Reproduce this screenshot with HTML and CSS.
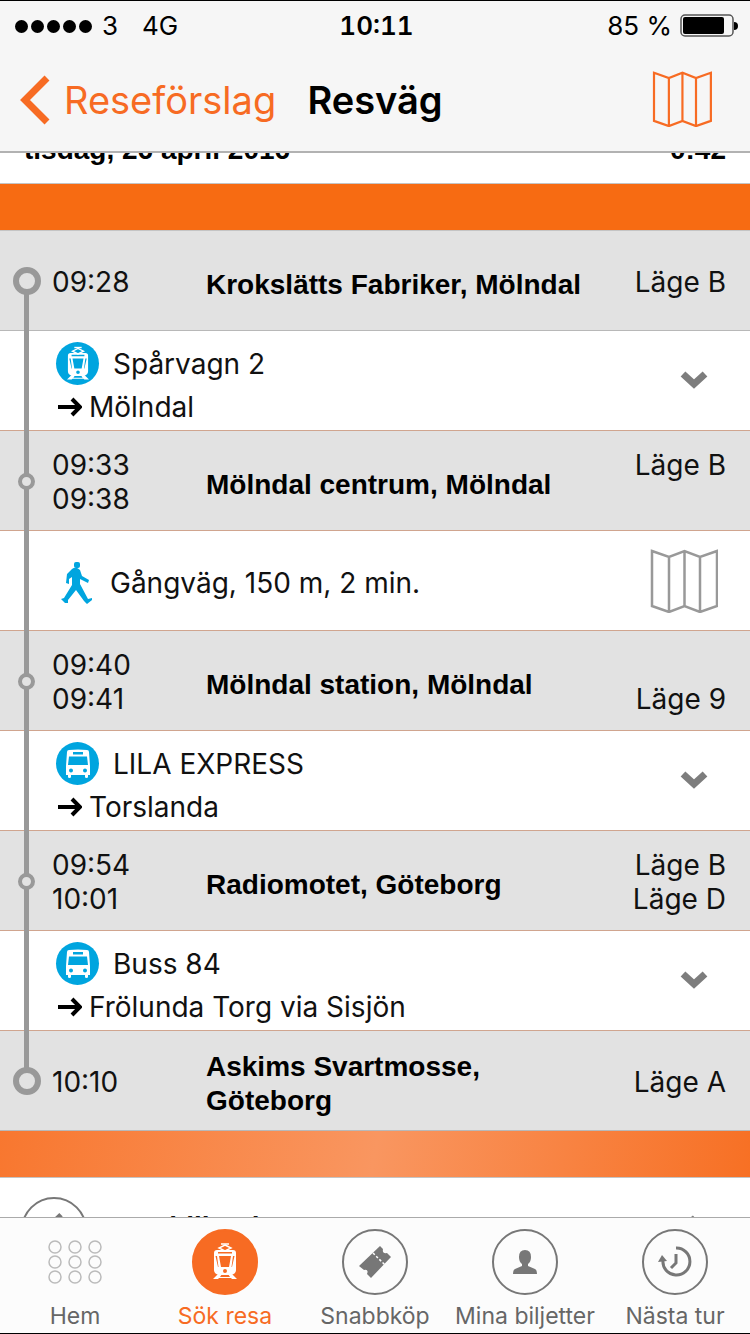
FILE: index.html
```html
<!DOCTYPE html>
<html lang="sv">
<head>
    <meta charset="utf-8">
    <meta name="viewport" content="width=device-width, initial-scale=1">
    <title>Resväg</title>
    <link rel="stylesheet" href="styles.css">
</head>
<body>
    <svg class="defs" aria-hidden="true">
        <symbol id="map" viewBox="0 0 68 64">
            <path d="M2 2 L19 8 L34.500 2 L50 8 L67 2 V57 L50 63 L34.500 57 L19 63 L2 57 Z M19 8 V63 M34.500 2 V57 M50 8 V63" fill="none" stroke="currentColor" stroke-width="2.500"/>
        </symbol>
        <symbol id="tram" viewBox="0 0 24 38">
            <path d="M12 2 L18 5 L12 8 L6 5 Z" fill="none" stroke="currentColor" stroke-width="1.500"/>
            <path d="M8 1 H16" stroke="currentColor" stroke-width="1.500"/>
            <path fill="currentColor" fill-rule="evenodd" d="M4 7 H20 Q23 7 23 10 V27 Q23 31 18 32 H6 Q1 31 1 27 V10 Q1 7 4 7 Z M5 9 V10.500 H19 V9 Z M2.500 13 L5 24 L5.500 24 L4 13 Z M6 13 L8 24 H16 L18 13 Z M21.500 13 L19 24 L18.500 24 L20 13 Z M12 26 A2 2 0 1 0 12 30 A2 2 0 1 0 12 26 Z"/>
            <path fill="currentColor" d="M5 31 H9 L7 34 H17 L15 31 H19 L24 36 H19 L18 35 H6 L5 36 H0 Z"/>
        </symbol>
        <symbol id="bus" viewBox="0 0 24 30">
            <path fill="currentColor" fill-rule="evenodd" d="M3 1 Q12 0 21 1 Q23 1 23 3 L24 17 V26 H22 V28 Q22 29 20.500 29 Q19 29 19 28 V26 H5 V28 Q5 29 3.500 29 Q2 29 2 28 V26 H0 V17 L1 3 Q1 1 3 1 Z M7 3 V5.500 H17 V3 Z M3 7.500 L2 16 H22 L21 7.500 Z M5 19.500 A2 2 0 1 0 5 23.500 A2 2 0 1 0 5 19.500 Z M19 19.500 A2 2 0 1 0 19 23.500 A2 2 0 1 0 19 19.500 Z"/>
        </symbol>
        <symbol id="walk" viewBox="0 0 32 42">
            <rect x="13" y="0" width="6" height="6" rx="2"/>
            <path d="M11 7 Q15 4 19 8 L21 14 L28 18 L27 21 L19 17 V22 L27 37 L31 36 V38 L26 42 L23 39 L15 28 L7 38 V41 L4 41 L0 37 L3 36 L11 23 V15 L8 17 V22 L5 21 L6 12 Z"/>
        </symbol>
        <symbol id="arrow" viewBox="0 0 26 20">
            <path d="M2 10 H24 M16 2 L24 10 L16 18" fill="none" stroke="currentColor" stroke-width="4"/>
        </symbol>
        <symbol id="chevron" viewBox="0 0 28 18">
            <path d="M3 3 L14 13 L25 3" fill="none" stroke="currentColor" stroke-width="7"/>
        </symbol>
        <symbol id="ticket" viewBox="0 0 32 32">
            <path fill="currentColor" d="M21 0 L24 3 Q23 8 28 7 L32 11 L12 32 L8 28 Q10 23 5 24 L0 20 Z"/>
            <path d="M14 7 L26 19" stroke="#fff" stroke-width="1.500" stroke-dasharray="2.500 2"/>
        </symbol>
    </svg>

    <header>
        <div class="status">
            <div class="carrier">
                <span class="signal"><i></i><i></i><i></i><i></i><i></i></span>
                <span>3</span>
                <span class="network">4G</span>
            </div>
            <strong>10:11</strong>
            <div class="battery">
                <span>85 %</span>
                <svg width="58" height="24" viewBox="0 0 58 24">
                    <rect x="1" y="1" width="52" height="21" rx="4" fill="none" stroke="#555" stroke-width="1.500"/>
                    <rect x="3" y="3" width="41" height="17" rx="2"/>
                    <path d="M54 8 Q58 8 58 12 Q58 16 54 16 Z"/>
                </svg>
            </div>
        </div>
        <div class="navbar">
            <a class="back" href="#">
                <svg width="30" height="50" viewBox="0 0 30 50"><path d="M27 3 L5 25 L27 47" fill="none" stroke="currentColor" stroke-width="7"/></svg>
                Reseförslag
            </a>
            <h1>Resväg</h1>
            <button class="map-link" aria-label="Karta"><svg width="60" height="56"><use href="#map"/></svg></button>
        </div>
    </header>

    <main>
        <div class="summary">
            <span>tisdag, 26 april 2016</span>
            <span>0:42</span>
        </div>
        <div class="band"></div>

        <ol class="route">
            <li class="stop">
                <span class="node big"></span>
                <div class="times">09:28</div>
                <h2>Krokslätts Fabriker, Mölndal</h2>
                <div class="platform">Läge B</div>
            </li>
            <li class="leg">
                <div class="ride">
                    <div class="line"><span class="badge"><svg width="22" height="36"><use href="#tram"/></svg></span>Spårvagn 2</div>
                    <div class="towards"><svg width="26" height="20"><use href="#arrow"/></svg>Mölndal</div>
                </div>
                <button class="more" aria-label="Visa hållplatser"><svg width="28" height="18"><use href="#chevron"/></svg></button>
            </li>
            <li class="stop">
                <span class="node"></span>
                <div class="times">09:33<br>09:38</div>
                <h2>Mölndal centrum, Mölndal</h2>
                <div class="platform">Läge B<br>&nbsp;</div>
            </li>
            <li class="leg">
                <div class="walk"><svg width="32" height="42"><use href="#walk"/></svg>Gångväg, 150 m, 2 min.</div>
                <button class="show-map" aria-label="Visa karta"><svg width="68" height="64"><use href="#map"/></svg></button>
            </li>
            <li class="stop">
                <span class="node"></span>
                <div class="times">09:40<br>09:41</div>
                <h2>Mölndal station, Mölndal</h2>
                <div class="platform">&nbsp;<br>Läge 9</div>
            </li>
            <li class="leg">
                <div class="ride">
                    <div class="line"><span class="badge"><svg width="24" height="30"><use href="#bus"/></svg></span>LILA EXPRESS</div>
                    <div class="towards"><svg width="26" height="20"><use href="#arrow"/></svg>Torslanda</div>
                </div>
                <button class="more" aria-label="Visa hållplatser"><svg width="28" height="18"><use href="#chevron"/></svg></button>
            </li>
            <li class="stop">
                <span class="node"></span>
                <div class="times">09:54<br>10:01</div>
                <h2>Radiomotet, Göteborg</h2>
                <div class="platform">Läge B<br>Läge D</div>
            </li>
            <li class="leg">
                <div class="ride">
                    <div class="line"><span class="badge"><svg width="24" height="30"><use href="#bus"/></svg></span>Buss 84</div>
                    <div class="towards"><svg width="26" height="20"><use href="#arrow"/></svg>Frölunda Torg via Sisjön</div>
                </div>
                <button class="more" aria-label="Visa hållplatser"><svg width="28" height="18"><use href="#chevron"/></svg></button>
            </li>
            <li class="stop">
                <span class="node big"></span>
                <div class="times">10:10</div>
                <h2>Askims Svartmosse, Göteborg</h2>
                <div class="platform">Läge A</div>
            </li>
        </ol>

        <div class="band fade"></div>
        <a class="buy" href="#">
            <span class="ring"><svg width="34" height="34"><use href="#ticket"/></svg></span>
            <span class="label">Köp biljett i appen</span>
            <svg class="next" width="18" height="32" viewBox="0 0 18 32"><path d="M3 3 L14 16 L3 29" fill="none" stroke="currentColor" stroke-width="5"/></svg>
        </a>
    </main>

    <nav>
        <a href="#">
            <svg width="66" height="66" viewBox="0 0 66 66" fill="none" stroke="#bbb" stroke-width="1.500">
                <circle cx="13" cy="18" r="6"/><circle cx="33" cy="18" r="6"/><circle cx="53" cy="18" r="6"/>
                <circle cx="13" cy="33" r="6"/><circle cx="33" cy="33" r="6"/><circle cx="53" cy="33" r="6"/>
                <circle cx="13" cy="48" r="6"/><circle cx="33" cy="48" r="6"/><circle cx="53" cy="48" r="6"/>
            </svg>
            Hem
        </a>
        <a class="active" href="#">
            <span class="ring"><svg width="24" height="38"><use href="#tram"/></svg></span>
            Sök resa
        </a>
        <a href="#">
            <span class="ring"><svg width="32" height="32"><use href="#ticket"/></svg></span>
            Snabbköp
        </a>
        <a href="#">
            <span class="ring"><svg width="24" height="26" viewBox="0 0 24 26"><path fill="currentColor" d="M12 1 Q18 1 18 8 Q18 13 15 15 V17 L22 20 Q24 21 24 25 H0 Q0 21 2 20 L9 17 V15 Q6 13 6 8 Q6 1 12 1 Z"/></svg></span>
            Mina biljetter
        </a>
        <a href="#">
            <span class="ring"><svg width="34" height="34" viewBox="0 0 34 34" fill="none" stroke="currentColor" stroke-width="3"><path d="M18 3 A13.500 13.500 0 1 1 5 15"/><path d="M18 9 V18 L13 23"/><path fill="currentColor" stroke="none" d="M0 17 L4 10 L9 16 Z"/></svg></span>
            Nästa tur
        </a>
    </nav>
</body>
</html>
```
FILE: styles.css
```css
* {
    box-sizing: border-box;
}
body {
    margin: 0;
    height: 100vh;
    display: flex;
    flex-direction: column;
    border-top: 1px solid #000;
    border-bottom: 1px solid #000;
    background: #fff;
    color: #111;
    font-family: Inter, "Noto Sans", sans-serif;
    font-size: 28px;
    line-height: 34px;
}
a {
    color: inherit;
    text-decoration: none;
}
button {
    padding: 0;
    border: none;
    background: none;
    color: inherit;
    cursor: pointer;
}
svg {
    display: block;
    flex: none;
}
h1, h2 {
    margin: 0;
}
.defs {
    position: absolute;
    width: 0;
    height: 0;
}

header {
    flex: none;
    background: #f6f6f6;
    border-bottom: 2px solid #b2b2b2;
}
.status {
    display: grid;
    grid-template-columns: 1fr auto 1fr;
    align-items: center;
    height: 50px;
    padding: 0 12px 0 15px;
    font-size: 26px;
    color: #000;
}
.status strong {
    font-weight: 600;
    font-variant-numeric: tabular-nums;
}
.carrier, .battery {
    display: flex;
    align-items: center;
    gap: 8px;
}
.battery {
    justify-content: flex-end;
}
.signal {
    display: flex;
    gap: 3px;
    padding-right: 2px;
}
.signal i {
    width: 13px;
    height: 13px;
    border-radius: 50%;
    background: #000;
}
.network {
    margin-left: 16px;
}
.navbar {
    display: grid;
    grid-template-columns: 1fr auto 1fr;
    align-items: center;
    height: 100px;
    padding: 0 20px 2px;
    font-size: 38px;
}
.back {
    display: flex;
    align-items: center;
    gap: 14px;
    color: #f76b23;
}
.navbar h1 {
    font-size: 38px;
    font-weight: 600;
    color: #000;
}
.map-link {
    justify-self: end;
    margin: 0 18px 2px 0;
    color: #f76b23;
}

main {
    flex: 1;
    min-height: 0;
    overflow: hidden;
}
/* the list is scrolled, so the date row is half under the header */
.summary {
    display: flex;
    justify-content: space-between;
    margin-top: -20px;
    padding: 0 24px 16px;
    border-bottom: 1px solid #c4c4c4;
    font-family: "Liberation Sans", Arial, sans-serif;
    font-size: 28px;
    font-weight: bold;
    color: #000;
}
.band {
    height: 47px;
    background: #f76b12;
    border-bottom: 1px solid #c4c4c4;
}
.band.fade {
    background: linear-gradient(100deg, #f8772f, #f99660 50%, #f77024);
}

.route {
    position: relative;
    margin: 0;
    padding: 0;
    list-style: none;
}
.route::before {
    content: "";
    position: absolute;
    top: 60px;
    bottom: 60px;
    left: 24px;
    width: 5px;
    background: #999;
}
.stop, .leg {
    min-height: 100px;
    border-bottom: 1px solid #d0a58f;
}
.stop:first-child, .stop:last-child {
    border-color: #b8b8b8;
}
.stop {
    display: grid;
    grid-template-columns: 52px 154px 1fr auto;
    align-items: center;
    padding: 3px 24px 0 0;
    background: #e2e2e2;
}
.stop h2 {
    padding-top: 6px;
    font-family: "Liberation Sans", Arial, sans-serif;
    font-size: 28px;
    color: #000;
}
.stop:last-child h2 {
    max-width: 300px;
    padding-top: 4px;
}
.node {
    z-index: 1;
    width: 17px;
    height: 17px;
    margin: 0 0 2px 18px;
    border: 4px solid #999;
    border-radius: 50%;
    background: #e2e2e2;
}
.node.big {
    width: 28px;
    height: 28px;
    margin-left: 13px;
    border-width: 6px;
}
.platform {
    text-align: right;
}
.leg {
    display: flex;
    align-items: center;
    justify-content: space-between;
    padding: 0 32px 0 56px;
}
.ride {
    padding-top: 8px;
}
.line {
    display: flex;
    align-items: center;
    gap: 14px;
    height: 44px;
}
.badge {
    display: flex;
    align-items: center;
    justify-content: center;
    width: 43px;
    height: 43px;
    border-radius: 50%;
    background: #00a5df;
    color: #fff;
}
.towards {
    display: flex;
    align-items: center;
    gap: 7px;
    height: 42px;
}
.towards svg {
    color: #000;
}
.walk {
    display: flex;
    align-items: center;
    gap: 17px;
    padding: 4px 0 0 5px;
}
.walk svg {
    fill: #00a5df;
}
.more {
    padding: 0 10px 2px;
    color: #7d7d7d;
}
.show-map {
    color: #999;
}

.ring {
    display: flex;
    align-items: center;
    justify-content: center;
    width: 66px;
    height: 66px;
    border: 2px solid #777;
    border-radius: 50%;
    color: #777;
}
.buy {
    display: flex;
    align-items: center;
    gap: 20px;
    padding: 19px 44px 20px 21px;
    font-family: "Liberation Sans", Arial, sans-serif;
    font-weight: bold;
}
.buy .label {
    padding-bottom: 6px;
}
.next {
    margin-left: auto;
    color: #7d7d7d;
}

nav {
    flex: none;
    display: grid;
    grid-template-columns: repeat(5, 1fr);
    height: 116px;
    border-top: 1px solid #aaa;
    background: #fcfcfc;
    color: #666;
    font-size: 23px;
    z-index: 1;
}
nav a {
    display: flex;
    flex-direction: column;
    align-items: center;
    gap: 4px;
    padding-top: 11px;
    white-space: nowrap;
}
nav .active {
    color: #f76b23;
}
.active .ring {
    border-color: #f76b23;
    background: #f76b23;
    color: #fff;
}
```
